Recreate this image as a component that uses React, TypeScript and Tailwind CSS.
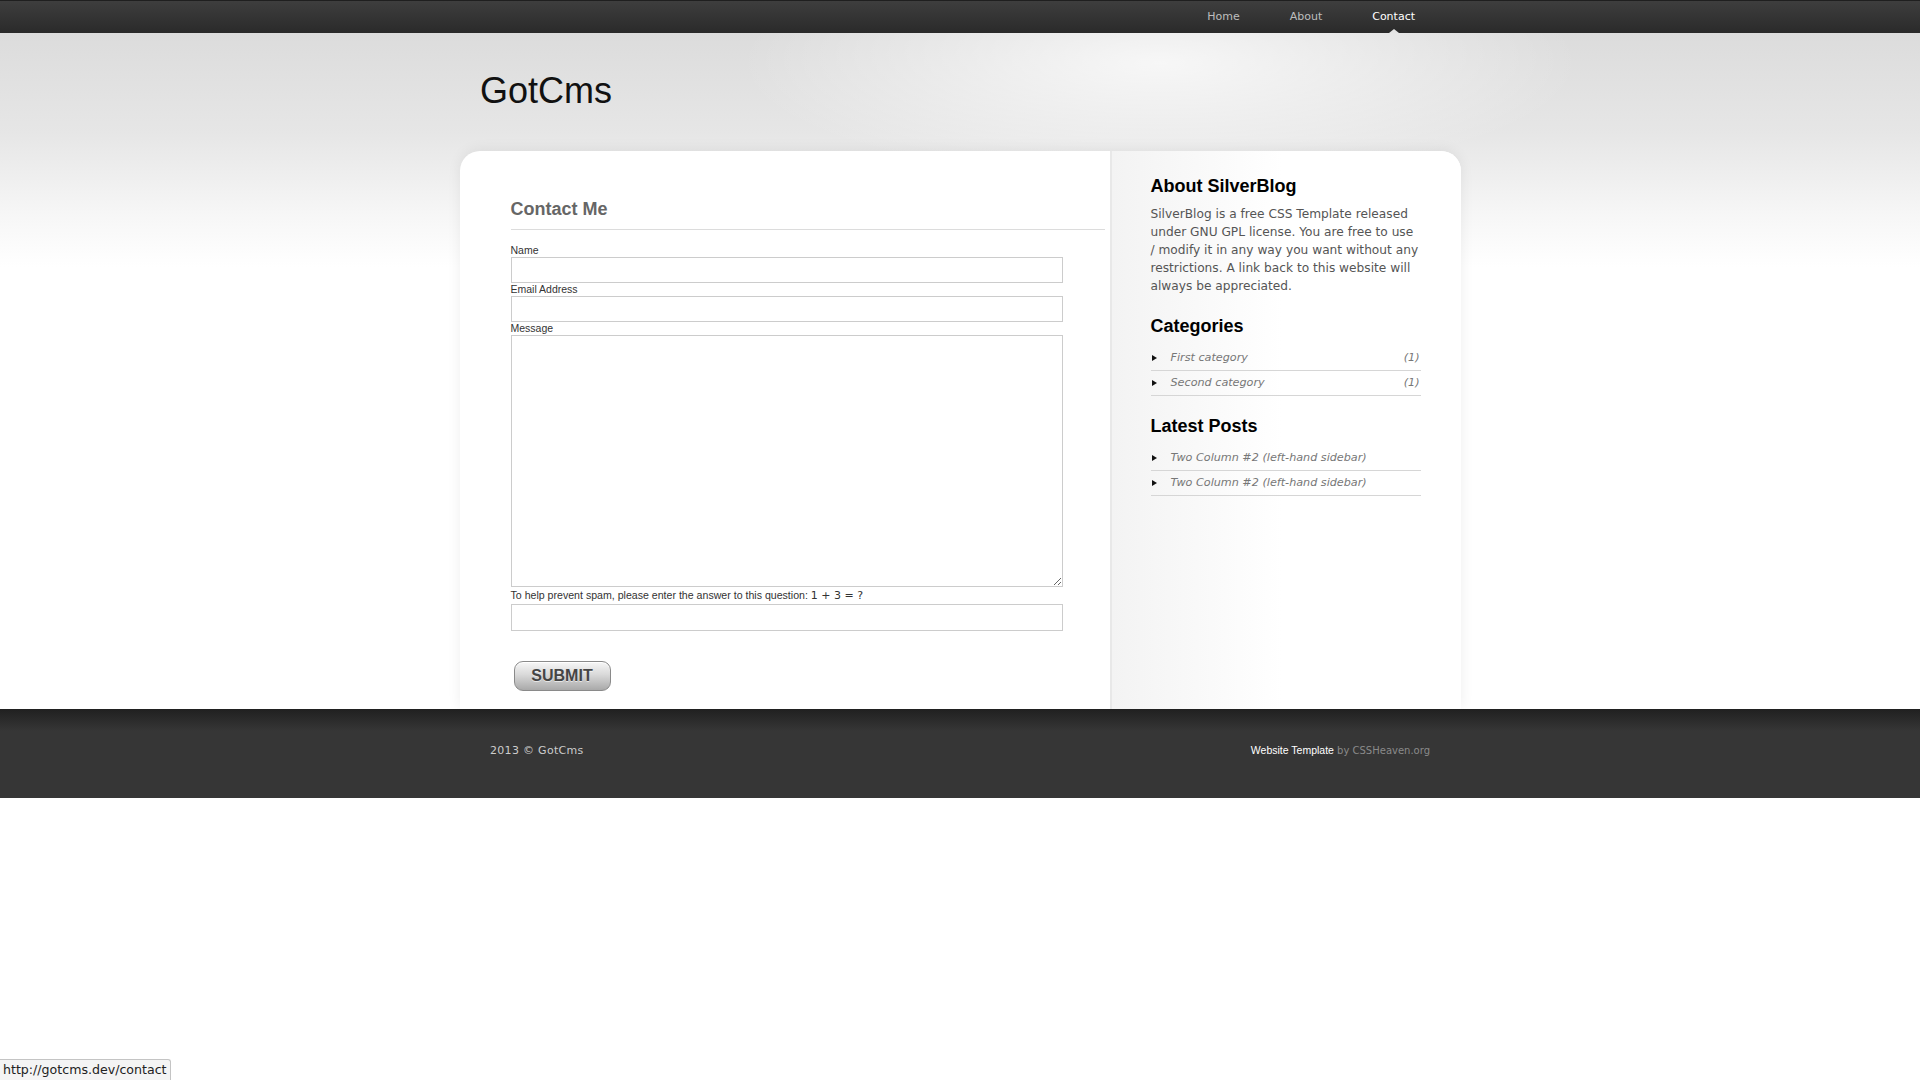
import React from 'react';

const navLinks = [
  { label: 'Home', active: false },
  { label: 'About', active: false },
  { label: 'Contact', active: true },
];

const categories = [
  { name: 'First category', count: 1 },
  { name: 'Second category', count: 1 },
];

const latestPosts = ['Two Column #2 (left-hand sidebar)', 'Two Column #2 (left-hand sidebar)'];

const Bullet = () => (
  <svg width="5" height="6" viewBox="0 0 5 6" className="shrink-0 ml-[1px]">
    <path d="M0 0L5 3L0 6Z" fill="#111" />
  </svg>
);

const Field: React.FC<{ label: React.ReactNode; tall?: boolean }> = ({ label, tall }) => (
  <div className="flex flex-col">
    <label className="h-[13px] leading-[13px] text-[10.5px] text-[#333] font-['Liberation_Sans',Arial,sans-serif]">
      {label}
    </label>
    {tall ? (
      <textarea className="w-[552px] h-[252px] border border-[#ccc] bg-white outline-none" />
    ) : (
      <input type="text" className="w-[552px] h-[26px] border border-[#ccc] bg-white outline-none" />
    )}
  </div>
);

export default function App() {
  return (
    <div className="min-h-[1080px] bg-white font-['DejaVu_Sans',sans-serif]">
      {/* top navigation */}
      <div className="h-[33px] bg-[linear-gradient(#3e3e3e,#2a2a2a)] border-t border-[#1f1f1f]">
        <div className="w-[960px] mx-auto h-full flex justify-end">
          {navLinks.map((l) => (
            <a
              key={l.label}
              href="#"
              className={
                'relative h-full flex items-center px-[25px] text-[11px] ' +
                (l.active ? 'text-white' : 'text-[#bdbdbd]')
              }
            >
              {l.label}
              {l.active && (
                <span className="absolute bottom-0 left-1/2 -translate-x-1/2 w-0 h-0 border-x-[5px] border-x-transparent border-b-[4px] border-b-[#e4e4e4]" />
              )}
            </a>
          ))}
        </div>
      </div>

      {/* header + card */}
      <div className="bg-[image:radial-gradient(ellipse_420px_120px_at_1160px_30px,rgba(255,255,255,0.75),rgba(255,255,255,0)),linear-gradient(#dcdcdc_0px,#e6e6e6_100px,#f6f6f6_180px,#ffffff_234px)]">
        <div className="w-[960px] mx-auto h-[118px] pt-[40px]">
          <h1 className="text-[36px] leading-none text-[#111] font-['Liberation_Sans',Arial,sans-serif]">GotCms</h1>
        </div>

        <div className="w-[1001px] mx-auto flex bg-white rounded-t-[20px] overflow-hidden shadow-[0_-1px_14px_rgba(0,0,0,0.07)]">
          {/* main column */}
          <div className="w-[650px] pl-[51px] pr-[5px] pt-[47px] pb-[18px]">
            <h2 className="text-[18px] leading-[22px] font-bold text-[#666] pb-[9px] border-b border-[#dcdcdc] font-['Liberation_Sans',Arial,sans-serif]">
              Contact Me
            </h2>
            <form className="flex flex-col mt-[14px]" onSubmit={(e) => e.preventDefault()}>
              <Field label="Name" />
              <Field label="Email Address" />
              <Field label="Message" tall />
              <div className="flex flex-col">
                <label className="h-[17px] leading-[17px] text-[10.6px] text-[#333] font-['Liberation_Sans',Arial,sans-serif]">
                  To help prevent spam, please enter the answer to this question:{' '}
                  <span className="text-[11px] font-['DejaVu_Sans',sans-serif]">1 + 3 = ?</span>
                </label>
                <input type="text" className="w-[552px] h-[27px] border border-[#ccc] bg-white outline-none" />
              </div>
              <button
                type="submit"
                className="mt-[30px] ml-[3px] w-[97px] h-[30px] rounded-[9px] border border-[#8a8a8a] bg-[linear-gradient(#f7f7f7,#d9d9d9_45%,#a9a9a9)] shadow-[inset_0_1px_0_#fff] text-[16px] font-bold text-[#454545] [text-shadow:0_1px_0_rgba(255,255,255,0.6)] font-['Liberation_Sans',Arial,sans-serif]"
              >
                SUBMIT
              </button>
            </form>
          </div>

          {/* sidebar */}
          <div className="flex-1 border-l-2 border-[#e8e8e8] bg-[linear-gradient(90deg,#f3f3f3,#ffffff_170px)] pl-[39px] pr-[40px] pt-[24px]">
            <h3 className="text-[18px] leading-[22px] font-bold text-black font-['Liberation_Sans',Arial,sans-serif]">About SilverBlog</h3>
            <p className="mt-[8px] text-[12.2px] leading-[18px] text-[#555]">
              SilverBlog is a free CSS Template released under GNU GPL license. You are free to use / modify it in any way
              you want without any restrictions. A link back to this website will always be appreciated.
            </p>

            <h3 className="mt-[20px] text-[18px] leading-[22px] font-bold text-black font-['Liberation_Sans',Arial,sans-serif]">Categories</h3>
            <ul className="mt-[9px]">
              {categories.map((c) => (
                <li key={c.name} className="h-[25px] flex items-center border-b border-[#d6d6d6] text-[11.2px] italic text-[#777]">
                  <Bullet />
                  <span className="ml-[14px] flex-1">{c.name}</span>
                  <span className="pr-[1px]">({c.count})</span>
                </li>
              ))}
            </ul>

            <h3 className="mt-[19px] text-[18px] leading-[22px] font-bold text-black font-['Liberation_Sans',Arial,sans-serif]">Latest Posts</h3>
            <ul className="mt-[9px]">
              {latestPosts.map((p, i) => (
                <li key={i} className="h-[25px] flex items-center border-b border-[#d6d6d6] text-[11.2px] italic text-[#777]">
                  <Bullet />
                  <span className="ml-[14px]">{p}</span>
                </li>
              ))}
            </ul>
          </div>
        </div>
      </div>

      {/* footer */}
      <div className="h-[89px] bg-[linear-gradient(#202020_0px,#363636_22px,#363636_100%)]">
        <div className="w-[960px] mx-auto px-[10px] pt-[35px] flex justify-between items-center leading-[13px]">
          <span className="text-[11px] tracking-[0.3px] text-[#cccccc]">2013 © GotCms</span>
          <span className="text-[10px]">
            <span className="text-white text-[10.5px] font-['Liberation_Sans',Arial,sans-serif]">Website Template</span>
            <span className="text-[#8a8a8a]"> by CSSHeaven.org</span>
          </span>
        </div>
      </div>

      {/* browser status bubble */}
      <div className="fixed bottom-0 left-0 h-[21px] px-[3px] flex items-center bg-[#f4f4f4] border border-l-0 border-b-0 border-[#c4c4c4] rounded-tr-[3px] text-[12.6px] text-[#222]">
        http://gotcms.dev/contact
      </div>
    </div>
  );
}
